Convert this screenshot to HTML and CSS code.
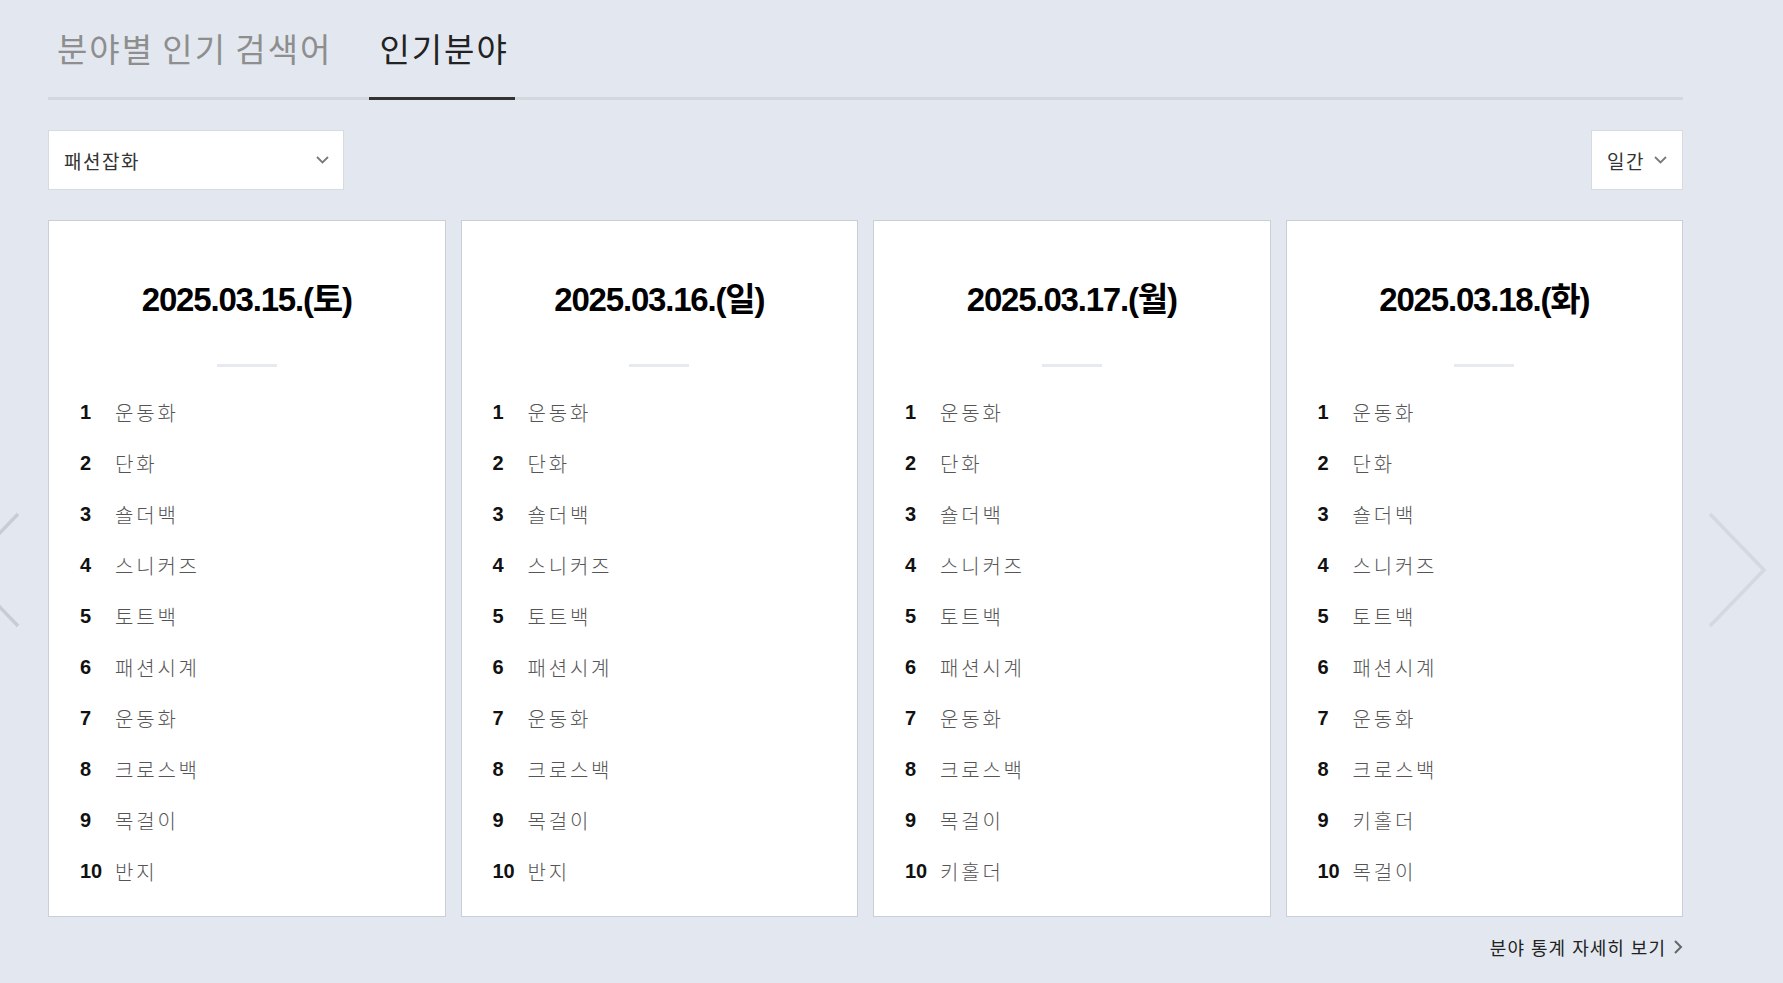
FILE: index.html
```html
<!DOCTYPE html>
<html lang="ko">
<head>
<meta charset="utf-8">
<title>인기분야</title>
<link rel="stylesheet" href="styles.css">
</head>
<body>
<div class="page">
  <nav class="tabs">
    <a class="tab">분야별 인기 검색어</a>
    <a class="tab active">인기분야</a>
  </nav>

  <div class="filters">
    <div class="select select-wide">
      <span>패션잡화</span>
      <svg class="chev" width="13" height="8" viewBox="0 0 13 8"><polyline points="1,1 6.5,6.5 12,1" fill="none" stroke="#7a7a7a" stroke-width="1.8"/></svg>
    </div>
    <div class="select select-small">
      <span>일간</span>
      <svg class="chev" width="13" height="8" viewBox="0 0 13 8"><polyline points="1,1 6.5,6.5 12,1" fill="none" stroke="#7a7a7a" stroke-width="1.8"/></svg>
    </div>
  </div>

  <div class="carousel">
    <svg class="arrow arrow-left" width="60" height="116" viewBox="0 0 60 116"><polyline points="56,2 2,58 56,114" fill="none" stroke="#c6ced4" stroke-width="3.5"/></svg>
    <svg class="arrow arrow-right" width="60" height="116" viewBox="0 0 60 116"><polyline points="2,2 56,58 2,114" fill="none" stroke="#d3d9e1" stroke-width="3.5"/></svg>

    <div class="cards">
      <section class="card">
        <h2 class="date">2025.03.15.(토)</h2>
        <div class="divider"></div>
        <ol class="rank">
          <li><b>1</b><span>운동화</span></li>
          <li><b>2</b><span>단화</span></li>
          <li><b>3</b><span>숄더백</span></li>
          <li><b>4</b><span>스니커즈</span></li>
          <li><b>5</b><span>토트백</span></li>
          <li><b>6</b><span>패션시계</span></li>
          <li><b>7</b><span>운동화</span></li>
          <li><b>8</b><span>크로스백</span></li>
          <li><b>9</b><span>목걸이</span></li>
          <li><b>10</b><span>반지</span></li>
        </ol>
      </section>
      <section class="card">
        <h2 class="date">2025.03.16.(일)</h2>
        <div class="divider"></div>
        <ol class="rank">
          <li><b>1</b><span>운동화</span></li>
          <li><b>2</b><span>단화</span></li>
          <li><b>3</b><span>숄더백</span></li>
          <li><b>4</b><span>스니커즈</span></li>
          <li><b>5</b><span>토트백</span></li>
          <li><b>6</b><span>패션시계</span></li>
          <li><b>7</b><span>운동화</span></li>
          <li><b>8</b><span>크로스백</span></li>
          <li><b>9</b><span>목걸이</span></li>
          <li><b>10</b><span>반지</span></li>
        </ol>
      </section>
      <section class="card">
        <h2 class="date">2025.03.17.(월)</h2>
        <div class="divider"></div>
        <ol class="rank">
          <li><b>1</b><span>운동화</span></li>
          <li><b>2</b><span>단화</span></li>
          <li><b>3</b><span>숄더백</span></li>
          <li><b>4</b><span>스니커즈</span></li>
          <li><b>5</b><span>토트백</span></li>
          <li><b>6</b><span>패션시계</span></li>
          <li><b>7</b><span>운동화</span></li>
          <li><b>8</b><span>크로스백</span></li>
          <li><b>9</b><span>목걸이</span></li>
          <li><b>10</b><span>키홀더</span></li>
        </ol>
      </section>
      <section class="card">
        <h2 class="date">2025.03.18.(화)</h2>
        <div class="divider"></div>
        <ol class="rank">
          <li><b>1</b><span>운동화</span></li>
          <li><b>2</b><span>단화</span></li>
          <li><b>3</b><span>숄더백</span></li>
          <li><b>4</b><span>스니커즈</span></li>
          <li><b>5</b><span>토트백</span></li>
          <li><b>6</b><span>패션시계</span></li>
          <li><b>7</b><span>운동화</span></li>
          <li><b>8</b><span>크로스백</span></li>
          <li><b>9</b><span>키홀더</span></li>
          <li><b>10</b><span>목걸이</span></li>
        </ol>
      </section>
    </div>
  </div>

  <div class="footer">
    <a class="more">분야 통계 자세히 보기
      <svg width="10" height="16" viewBox="0 0 10 16"><polyline points="2,2 8,8 2,14" fill="none" stroke="#666" stroke-width="2"/></svg>
    </a>
  </div>
</div>
</body>
</html>
```

FILE: styles.css
```css
html, body {
  margin: 0;
  padding: 0;
}

body {
  background: #e3e8f0;
  font-family: "Noto Sans CJK KR", "Noto Sans", sans-serif;
  color: #333;
  width: 1783px;
  height: 983px;
  overflow: hidden;
}

.page {
  width: 1635px;
  margin-left: 48px;
  position: relative;
}

/* Tabs */
.tabs {
  display: flex;
  gap: 28px;
  border-bottom: 3px solid #d3d8df;
  height: 97px;
}

.tab {
  display: block;
  padding: 26px 9px 0;
  font-size: 33px;
  line-height: 44px;
  letter-spacing: 2px;
  word-spacing: -3px;
  color: #8e8e8e;
  height: 71px;
}

.tab.active {
  color: #222;
  padding: 26px 6px 0 10px;
  border-bottom: 3px solid #333;
  height: 71px;
  margin-bottom: -3px;
}

/* Filters */
.filters {
  display: flex;
  justify-content: space-between;
  margin-top: 30px;
}

.select {
  display: flex;
  align-items: center;
  justify-content: space-between;
  height: 58px;
  background: #fff;
  border: 1px solid #d6dbe1;
  padding: 0 14px 0 15px;
  font-size: 19px;
  letter-spacing: 1.5px;
  color: #333;
}

.select-wide {
  width: 265px;
}

.select-small {
  width: 60px;
  gap: 8px;
  padding-right: 15px;
}

.chev {
  display: block;
}

/* Carousel */
.carousel {
  margin-top: 30px;
  position: relative;
}

.arrow {
  position: absolute;
  top: 292px;
}

.arrow-left {
  left: -86px;
}

.arrow-right {
  left: 1660px;
}

.cards {
  display: grid;
  grid-template-columns: repeat(4, 1fr);
  gap: 15px;
}

.card {
  background: #fff;
  border: 1px solid #c8cfd9;
  padding-top: 59px;
  height: 636px;
}

.date {
  margin: 0;
  text-align: center;
  font-family: "Liberation Sans", "Noto Sans CJK KR", sans-serif;
  font-weight: bold;
  font-size: 33px;
  letter-spacing: -1.2px;
  line-height: 40px;
  color: #000;
}

.divider {
  width: 60px;
  height: 3px;
  background: #e6e9ed;
  margin: 44px auto 0;
}

.rank {
  list-style: none;
  margin: 20px 0 0;
  padding: 0 0 0 31px;
}

.rank li {
  display: flex;
  align-items: center;
  height: 51px;
}

.rank b {
  width: 35px;
  font-family: "Liberation Sans", sans-serif;
  font-weight: bold;
  font-size: 20px;
  color: #111;
}

.rank span {
  font-size: 20px;
  font-weight: 300;
  color: #555;
  letter-spacing: 2.8px;
}

/* Footer */
.footer {
  display: flex;
  justify-content: flex-end;
  margin-top: 18px;
}

.more {
  display: flex;
  align-items: center;
  gap: 7px;
  font-size: 18px;
  letter-spacing: 1px;
  line-height: 24px;
  color: #222;
}

.more svg {
  display: block;
}
```
